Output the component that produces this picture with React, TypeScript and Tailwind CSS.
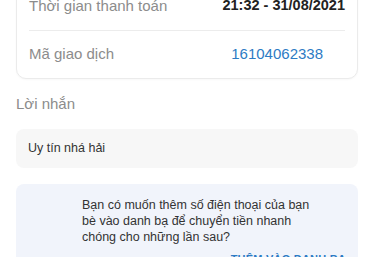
const rows = [
  { label: "Thời gian thanh toán", value: "21:32 - 31/08/2021", bold: true },
  { label: "Mã giao dịch", value: "16104062338", link: true },
];

export default function App() {
  return (
    <main
      className="h-[257px] w-[374px] overflow-hidden bg-white px-4"
      style={{ fontFamily: '"Liberation Sans", Arial, sans-serif' }}
    >
      <div className="-mt-[19px] rounded-[10px] border border-[#ebebeb] bg-white px-3 shadow-[0_1px_2px_rgba(0,0,0,0.03)]">
        {rows.map((row, i) => (
          <div
            key={row.label}
            className={`flex h-12 items-center justify-between ${i > 0 ? "border-t border-[#ececec]" : ""}`}
          >
            <span className="text-[15px] text-[#8c8c8c]">{row.label}</span>
            {row.link ? (
              <span className="mr-[22px] text-[15px] text-[#2d7bc4]">{row.value}</span>
            ) : (
              <span className="text-[14.5px] font-bold text-[#222]">{row.value}</span>
            )}
          </div>
        ))}
      </div>

      <p className="mt-[14px] text-[15px] text-[#8c8c8c]">Lời nhắn</p>

      <div className="mt-[13px] flex h-[39px] items-center rounded-lg bg-[#f7f7f7] px-3">
        <span className="text-[12.5px] text-[#333]">Uy tín nhá hải</span>
      </div>

      <div className="mt-4 rounded-lg bg-[#f1f4fb] pb-3 pl-[66px] pr-[36px] pt-[13px]">
        <p className="text-[12.5px] leading-4 text-[#333]">
          Bạn có muốn thêm số điện thoại của bạn bè vào danh bạ để chuyển tiền nhanh chóng cho những lần sau?
        </p>
        <div className="-mr-6 mt-[6px] text-right text-[11px] font-bold leading-4 tracking-[0.02em] text-[#2d7bc4]">
          THÊM VÀO DANH BẠ
        </div>
      </div>
    </main>
  );
}
